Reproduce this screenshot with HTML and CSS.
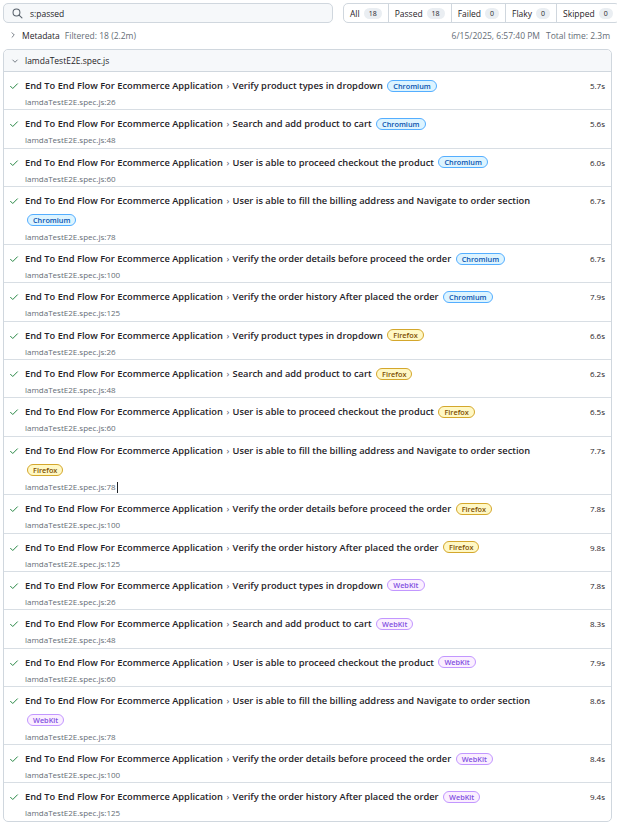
FILE: index.html
```html
<!DOCTYPE html>
<html>
<head>
<meta charset="utf-8">
<link rel="stylesheet" href="styles.css">
</head>
<body>
<div class="top">
  <div class="search">
    <svg class="mag" width="11" height="11" viewBox="0 0 16 16"><circle cx="6.5" cy="6.5" r="5" fill="none" stroke="#57606a" stroke-width="1.5"/><path d="M10.2 10.2 L14.5 14.5" stroke="#57606a" stroke-width="1.5" stroke-linecap="round"/></svg>
    <span>s:passed</span>
  </div>
  <div class="filters">
    <div class="f">All <span class="cnt">18</span></div>
    <div class="f">Passed <span class="cnt">18</span></div>
    <div class="f">Failed <span class="cnt">0</span></div>
    <div class="f">Flaky <span class="cnt">0</span></div>
    <div class="f">Skipped <span class="cnt">0</span></div>
  </div>
</div>
<div class="meta">
  <div class="meta-left">
    <svg width="8" height="8" viewBox="0 0 16 16"><path d="M6 3.5 L10.5 8 L6 12.5" fill="none" stroke="#57606a" stroke-width="1.6" stroke-linecap="round" stroke-linejoin="round"/></svg>
    <span class="mt">Metadata</span><span class="filt">Filtered: 18 (2.2m)</span>
  </div>
  <div class="meta-right"><span>6/15/2025, 6:57:40 PM</span><span>Total time: 2.3m</span></div>
</div>
<div class="file">
  <div class="file-head">
    <svg width="8" height="8" viewBox="0 0 16 16"><path d="M3.5 6 L8 10.5 L12.5 6" fill="none" stroke="#57606a" stroke-width="1.6" stroke-linecap="round" stroke-linejoin="round"/></svg>
    <span>lamdaTestE2E.spec.js</span>
  </div>
  <div id="rows"></div>
</div>
<script src="app.js"></script>
</body>
</html>
```
FILE: styles.css
```css
* { box-sizing: border-box; }
body { margin: 0; background: #fff; font-family: "Open Sans", "Noto Sans", sans-serif; color: #1f2328; font-size: 8.5px; }
.top { display: flex; padding: 3px 5px 0 3px; gap: 10px; height: 23px; }
.search { flex: 0 0 330px; height: 20px; border: 1px solid #d0d7de; border-radius: 5px; background: #f6f8fa; display: flex; align-items: center; padding-left: 8px; gap: 7px; font-size: 8.5px; color: #1f2328; }
.filters { flex: 1; display: flex; height: 20px; border: 1px solid #d0d7de; border-radius: 5px; }
.f { display: flex; align-items: center; padding: 0 6px; gap: 4px; border-left: 1px solid #d0d7de; white-space: nowrap; flex: 1 1 auto; }
.f:first-child { border-left: none; }
.cnt { background: #eaeef2; border-radius: 8px; font-size: 7px; padding: 0 5px; line-height: 11px; }
.meta { display: flex; justify-content: space-between; align-items: center; height: 23px; padding: 1px 7px 0 9px; }
.meta-left { display: flex; align-items: center; gap: 4px; }
.meta-left svg { margin-right: 1px; }
.mt { color: #1f2328; }
.filt { color: #656d76; margin-left: 1px; }
.meta-right { display: flex; gap: 6px; color: #656d76; }
.file { margin: 3px 5px 0 3px; border: 1px solid #d0d7de; border-radius: 5px; }
.file-head { height: 22px; background: #f6f8fa; display: flex; align-items: center; gap: 6px; padding-left: 7px; border-bottom: 1px solid #d0d7de; border-radius: 5px 5px 0 0; font-weight: 500; font-size: 8.5px; }
.row { display: flex; padding: 4px 6px 1.3px 5px; border-bottom: 1px solid #d8dee4; }
.row:last-child { border-bottom: none; }
.chk { width: 16px; flex: 0 0 16px; height: 20px; display: flex; align-items: center; }
.main { flex: 1; min-width: 0; padding-right: 20px; }
.title { line-height: 20px; font-weight: 600; font-size: 9.3px; }
.sep { color: #57606a; padding: 0 1px; font-weight: 400; }
.loc { color: #656d76; font-size: 8px; line-height: 12px; }
.caret { display: inline-block; width: 1px; height: 11px; background: #1f2328; vertical-align: middle; margin-left: 1px; }
.dur { line-height: 20px; font-size: 8px; white-space: nowrap; }
.badge { display: inline-block; vertical-align: middle; margin-left: 2px; line-height: 10px; font-size: 7.3px; padding: 0 5px; border: 1px solid; border-radius: 8px; font-weight: 600; position: relative; top: -1px; }
.b-chromium { color: #0550ae; background: #ddf4ff; border-color: #54aeff; }
.b-firefox { color: #7d4e00; background: #fff8c5; border-color: #d4a72c; }
.b-webkit { color: #8250df; background: #fbefff; border-color: #c297ff; }
```
FILE: app.js
```js
const tests = [
  ["Verify product types in dropdown", "Chromium", "26", "5.7s"],
  ["Search and add product to cart", "Chromium", "48", "5.6s"],
  ["User is able to proceed checkout the product", "Chromium", "60", "6.0s"],
  ["User is able to fill the billing address and Navigate to order section", "Chromium", "78", "6.7s"],
  ["Verify the order details before proceed the order", "Chromium", "100", "6.7s"],
  ["Verify the order history After placed the order", "Chromium", "125", "7.9s"],
  ["Verify product types in dropdown", "Firefox", "26", "6.6s"],
  ["Search and add product to cart", "Firefox", "48", "6.2s"],
  ["User is able to proceed checkout the product", "Firefox", "60", "6.5s"],
  ["User is able to fill the billing address and Navigate to order section", "Firefox", "78", "7.7s", true],
  ["Verify the order details before proceed the order", "Firefox", "100", "7.8s"],
  ["Verify the order history After placed the order", "Firefox", "125", "9.8s"],
  ["Verify product types in dropdown", "WebKit", "26", "7.8s"],
  ["Search and add product to cart", "WebKit", "48", "8.3s"],
  ["User is able to proceed checkout the product", "WebKit", "60", "7.9s"],
  ["User is able to fill the billing address and Navigate to order section", "WebKit", "78", "8.6s"],
  ["Verify the order details before proceed the order", "WebKit", "100", "8.4s"],
  ["Verify the order history After placed the order", "WebKit", "125", "9.4s"]
];
const check = '<svg width="10" height="10" viewBox="0 0 16 16"><path d="M2.5 8.5 L6 12 L13.5 4.5" fill="none" stroke="#1a7f37" stroke-width="1.5" stroke-linecap="round" stroke-linejoin="round"/></svg>';
const rows = document.getElementById("rows");
rows.innerHTML = tests.map(([name, br, line, dur, caret]) =>
  `<div class="row"><div class="chk">${check}</div><div class="main"><div class="title">End To End Flow For Ecommerce Application <span class="sep">›</span> ${name} <span class="badge b-${br.toLowerCase()}">${br}</span></div><div class="loc">lamdaTestE2E.spec.js:${line}${caret ? '<span class="caret"></span>' : ''}</div></div><div class="dur">${dur}</div></div>`
).join("");
```
